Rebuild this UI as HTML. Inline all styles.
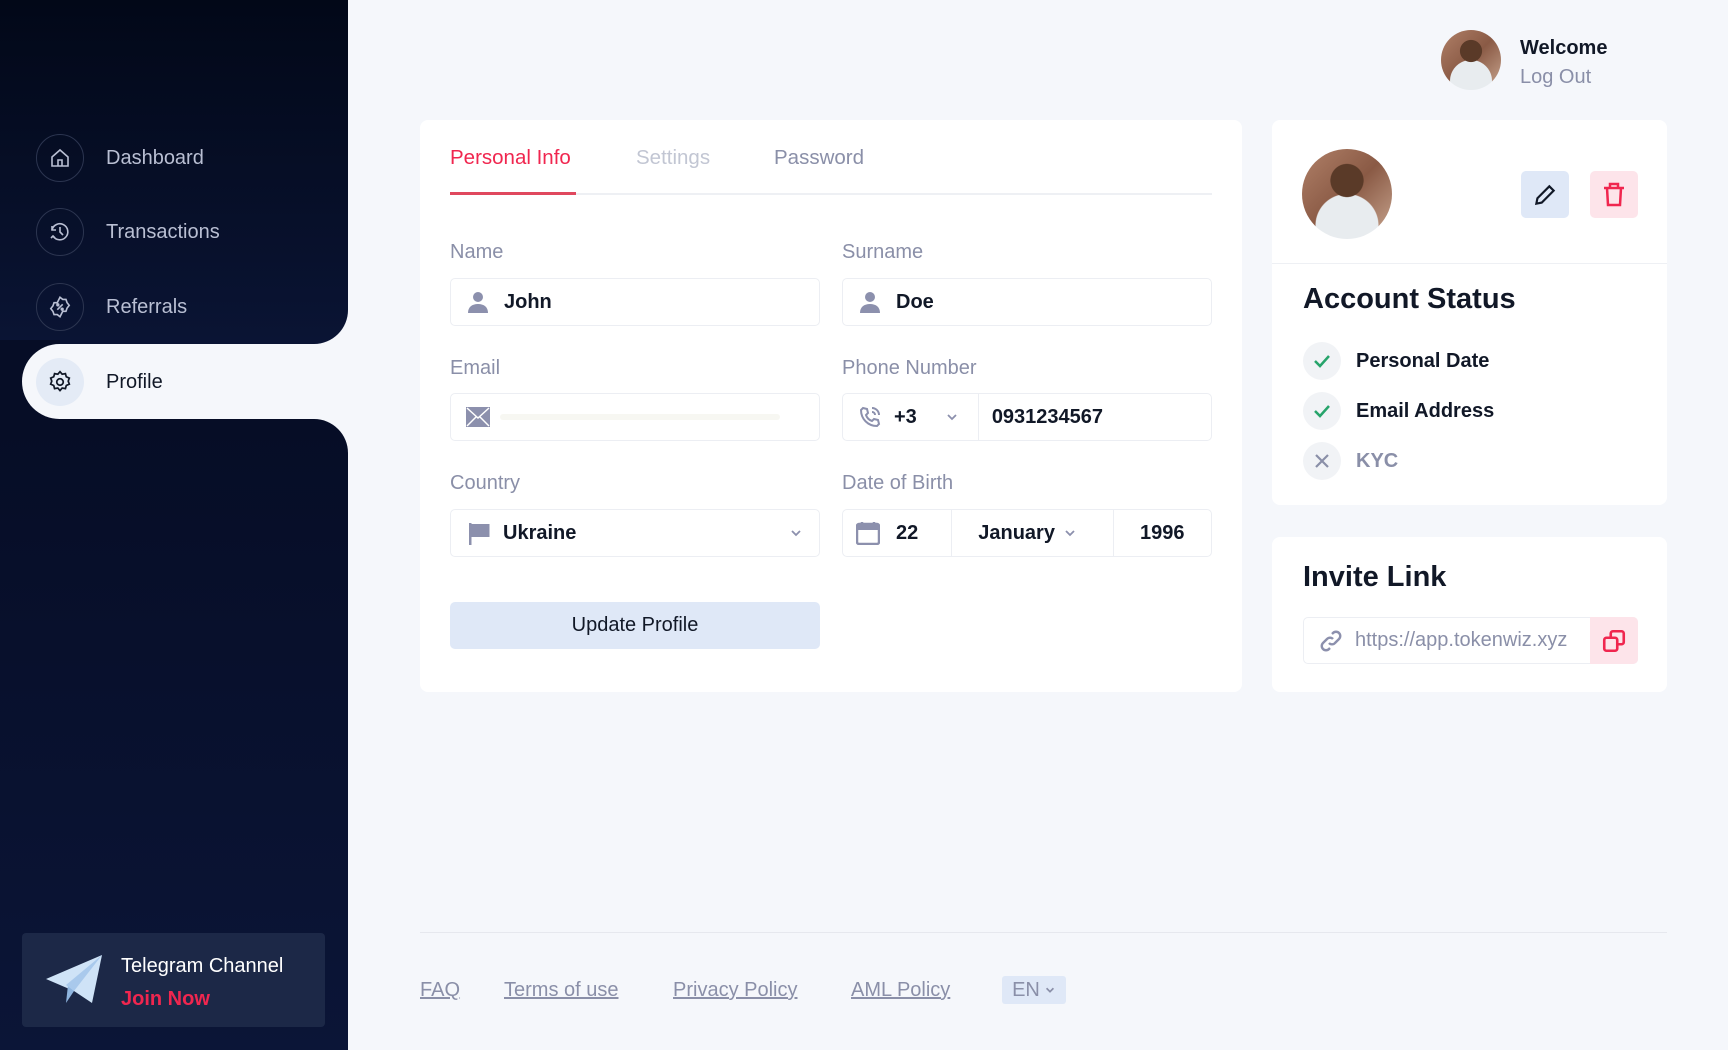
<!DOCTYPE html>
<html><head><meta charset="utf-8"><style>
*{box-sizing:border-box;margin:0;padding:0}
body{width:1728px;height:1050px;background:#f5f7fb;font-family:"Liberation Sans",sans-serif;position:relative;overflow:hidden;color:#111827}
.a{position:absolute}
.dark{background:linear-gradient(180deg,#020818,#0a1434)}
.nav{position:absolute;left:36px;width:300px;height:48px;display:flex;align-items:center;color:#b9bfd3;font-size:20px}
.nav .ic{width:48px;height:48px;border-radius:50%;border:1.5px solid #2c3550;display:flex;align-items:center;justify-content:center;margin-right:22px}
.card{position:absolute;background:#fff;border-radius:8px}
.lbl{position:absolute;color:#8a8fa8;font-size:20px}
.inp{position:absolute;height:48px;border:1px solid #eceef3;border-radius:5px;background:#fff;display:flex;align-items:center;font-size:20px;font-weight:bold;color:#111827}
.st{position:absolute;left:1303px;display:flex;align-items:center;font-size:20px;font-weight:bold;color:#111827}
.st .c{width:38px;height:38px;border-radius:50%;background:#f1f3f6;display:flex;align-items:center;justify-content:center;margin-right:15px}
.ft{position:absolute;top:979px;font-size:20px;color:#8a8fa8;text-decoration:underline}
.photo{border-radius:50%;background:radial-gradient(circle at 50% 35%,#5a3a28 0 22%,transparent 23%),radial-gradient(circle at 50% 85%,#e8ecef 0 35%,transparent 36%),linear-gradient(135deg,#b08068,#8a5a45 50%,#c9a690)}
</style></head><body>
<div class="a dark" style="left:0;top:0;width:348px;height:344px;border-bottom-right-radius:34px"></div>
<div class="a" style="left:0;top:340px;width:60px;height:84px;background:#060d26"></div>
<div class="a dark" style="left:0;top:419px;width:348px;height:631px;border-top-right-radius:34px;background:linear-gradient(180deg,#060d26,#0b1537)"></div>
<div class="a" style="left:22px;top:344px;width:340px;height:75px;background:#f5f7fb;border-radius:38px 0 0 38px"></div>

<div class="nav" style="top:134px"><div class="ic"><svg width="24" height="24" viewBox="0 0 24 24" fill="none" stroke="#b9bfd3" stroke-width="1.6"><path d="M4 11l8-7 8 7v9H4z"/><path d="M10 20v-6h4v6"/></svg></div>Dashboard</div>
<div class="nav" style="top:208px"><div class="ic"><svg width="24" height="24" viewBox="0 0 24 24" fill="none" stroke="#b9bfd3" stroke-width="1.6"><path d="M5 16a8 8 0 1 0-1-6"/><path d="M4 6v4h4M12 7v5l3 3M3 18l2-2 2 2"/></svg></div>Transactions</div>
<div class="nav" style="top:283px"><div class="ic"><svg width="26" height="26" viewBox="0 0 24 24" fill="none" stroke="#b9bfd3" stroke-width="1.5"><path d="M12 3l2.5 2h3l1 3 2 2.5-2 2.5-1 3h-3L12 21l-2.5-2h-3l-1-3L3.5 13.5 5.5 11l1-3h3z"/><path d="M9.5 14.5l5-5"/><circle cx="10" cy="10" r=".8"/><circle cx="14" cy="14" r=".8"/></svg></div>Referrals</div>
<div class="nav" style="top:358px;color:#111827"><div class="ic" style="border:none;background:#e4ebf6"><svg width="26" height="26" viewBox="0 0 24 24" fill="none" stroke="#111827" stroke-width="1.6"><circle cx="12" cy="12" r="3"/><path d="M12 2.5l2 2.3 3-.5.8 2.9 2.8 1.2-1 2.8 1 2.8-2.8 1.2-.8 2.9-3-.5-2 2.3-2-2.3-3 .5-.8-2.9-2.8-1.2 1-2.8-1-2.8 2.8-1.2.8-2.9 3 .5z"/></svg></div>Profile</div>

<div class="a" style="left:22px;top:933px;width:303px;height:94px;background:#1c2847;border-radius:4px"></div>
<svg class="a" style="left:44px;top:953px" width="60" height="54" viewBox="0 0 60 54"><path d="M2 26L58 2 48 50 30 38z" fill="#cfe3f7"/><path d="M30 38l-8 12 2-18z" fill="#8fb5df"/><path d="M22 32L58 2 30 38z" fill="#a9c9ec"/></svg>
<div class="a" style="left:121px;top:955px;color:#fff;font-size:20px">Telegram Channel</div>
<div class="a" style="left:121px;top:988px;color:#f0264f;font-size:20px;font-weight:bold">Join Now</div>

<div class="a photo" style="left:1441px;top:30px;width:60px;height:60px"></div>
<div class="a" style="left:1520px;top:37px;font-size:20px;font-weight:bold;color:#111827">Welcome</div>
<div class="a" style="left:1520px;top:66px;font-size:20px;color:#8a8fa8">Log Out</div>

<div class="card" style="left:420px;top:120px;width:822px;height:572px"></div>
<div class="a" style="left:450px;top:146px;font-size:20.5px;color:#f0264f">Personal Info</div>
<div class="a" style="left:636px;top:146px;font-size:20.5px;color:#c2c6d3">Settings</div>
<div class="a" style="left:774px;top:146px;font-size:20.5px;color:#8a8fa8">Password</div>
<div class="a" style="left:450px;top:193px;width:762px;height:2px;background:#eef0f4"></div>
<div class="a" style="left:450px;top:192px;width:126px;height:3px;background:#e0485e"></div>

<div class="lbl" style="left:450px;top:241px">Name</div>
<div class="lbl" style="left:842px;top:241px">Surname</div>
<div class="inp" style="left:450px;top:278px;width:370px"><svg style="margin:0 14px 0 15px" width="24" height="24" viewBox="0 0 24 24" fill="#8c90ad"><circle cx="12" cy="7" r="5"/><path d="M2 23c0-6 4-9 10-9s10 3 10 9z"/></svg>John</div>
<div class="inp" style="left:842px;top:278px;width:370px"><svg style="margin:0 14px 0 15px" width="24" height="24" viewBox="0 0 24 24" fill="#8c90ad"><circle cx="12" cy="7" r="5"/><path d="M2 23c0-6 4-9 10-9s10 3 10 9z"/></svg>Doe</div>

<div class="lbl" style="left:450px;top:357px">Email</div>
<div class="lbl" style="left:842px;top:357px">Phone Number</div>
<div class="inp" style="left:450px;top:393px;width:370px"><svg style="margin:0 0 0 15px" width="24" height="20" viewBox="0 0 24 20"><rect width="24" height="20" fill="#8c90ad"/><path d="M1 1l11 10L23 1M1 19l9-9M23 19l-9-9" stroke="#fff" stroke-width="1.5" fill="none"/></svg><div style="margin-left:10px;width:280px;height:6px;background:#f7f7f2;border-radius:3px"></div></div>
<div class="inp" style="left:842px;top:393px;width:370px"><svg style="margin:0 12px 0 15px" width="24" height="24" viewBox="0 0 24 24" fill="none" stroke="#8c90ad" stroke-width="2"><path d="M5 3l4 1 1 4-2 2c1 3 3 5 6 6l2-2 4 1 1 4-2 2C10 21 3 14 3 5z"/><path d="M14 3a7 7 0 0 1 7 7M14 7a3 3 0 0 1 3 3"/></svg>+3<svg style="margin-left:28px" width="14" height="14" viewBox="0 0 14 14" fill="none" stroke="#8c90ad" stroke-width="1.8"><path d="M3 5l4 4 4-4"/></svg><div style="width:1px;height:46px;background:#eceef3;margin:0 13px 0 19px"></div>0931234567</div>

<div class="lbl" style="left:450px;top:472px">Country</div>
<div class="lbl" style="left:842px;top:472px">Date of Birth</div>
<div class="inp" style="left:450px;top:509px;width:370px"><svg style="margin:0 12px 0 16px" width="24" height="26" viewBox="0 0 24 26"><rect x="2" y="3" width="2.5" height="22" fill="#8c90ad"/><path d="M4.5 4h18v13h-18z" fill="#8c90ad"/></svg>Ukraine<svg style="position:absolute;right:16px" width="14" height="14" viewBox="0 0 14 14" fill="none" stroke="#8c90ad" stroke-width="1.8"><path d="M3 5l4 4 4-4"/></svg></div>
<div class="inp" style="left:842px;top:509px;width:370px"><svg style="margin:0 16px 0 13px" width="24" height="24" viewBox="0 0 24 24"><rect x="1" y="3" width="22" height="20" rx="2" fill="none" stroke="#8c90ad" stroke-width="2.5"/><rect x="1" y="3" width="22" height="6" fill="#8c90ad"/><path d="M6 1v4M18 1v4" stroke="#8c90ad" stroke-width="2.5"/></svg>22<div style="width:1px;height:46px;background:#eceef3;margin-left:33px"></div><span style="margin-left:26px">January</span><svg style="margin-left:8px" width="14" height="14" viewBox="0 0 14 14" fill="none" stroke="#8c90ad" stroke-width="1.8"><path d="M3 5l4 4 4-4"/></svg><div style="width:1px;height:46px;background:#eceef3;margin-left:36px"></div><span style="margin-left:26px">1996</span></div>

<div class="a" style="left:450px;top:602px;width:370px;height:47px;background:#dfe8f7;border-radius:5px;display:flex;align-items:center;justify-content:center;font-size:20px;color:#111827">Update Profile</div>

<div class="card" style="left:1272px;top:120px;width:395px;height:385px"></div>
<div class="a photo" style="left:1302px;top:149px;width:90px;height:90px"></div>
<div class="a" style="left:1521px;top:171px;width:48px;height:47px;background:#dfe8f7;border-radius:5px;display:flex;align-items:center;justify-content:center"><svg width="26" height="26" viewBox="0 0 24 24" fill="none" stroke="#111827" stroke-width="2"><path d="M4 20l1-5L16 4l4 4L9 19z"/></svg></div>
<div class="a" style="left:1590px;top:171px;width:48px;height:47px;background:#fde4ea;border-radius:5px;display:flex;align-items:center;justify-content:center"><svg width="24" height="26" viewBox="0 0 24 26" fill="none" stroke="#f0264f" stroke-width="2.5"><path d="M2 6h20M8 6V2h8v4M5 6l1 17h12l1-17"/></svg></div>
<div class="a" style="left:1272px;top:263px;width:395px;height:1px;background:#eef0f4"></div>
<div class="a" style="left:1303px;top:283px;font-size:29px;font-weight:bold;color:#111827">Account Status</div>
<div class="st" style="top:342px"><div class="c"><svg width="18" height="14" viewBox="0 0 18 14" fill="none" stroke="#27a46b" stroke-width="2.5"><path d="M2 7l5 5L16 2"/></svg></div>Personal Date</div>
<div class="st" style="top:392px"><div class="c"><svg width="18" height="14" viewBox="0 0 18 14" fill="none" stroke="#27a46b" stroke-width="2.5"><path d="M2 7l5 5L16 2"/></svg></div>Email Address</div>
<div class="st" style="top:442px;color:#8a8fa8"><div class="c"><svg width="16" height="16" viewBox="0 0 16 16" fill="none" stroke="#8a8fa8" stroke-width="2.2"><path d="M2 2l12 12M14 2L2 14"/></svg></div>KYC</div>

<div class="card" style="left:1272px;top:537px;width:395px;height:155px"></div>
<div class="a" style="left:1303px;top:561px;font-size:29px;font-weight:bold;color:#111827">Invite Link</div>
<div class="a" style="left:1303px;top:617px;width:335px;height:47px;border:1px solid #eceef3;border-radius:5px;display:flex;align-items:center;font-size:20px;color:#8a8fa8;overflow:hidden;white-space:nowrap"><svg style="margin:0 12px 0 15px;flex:none" width="24" height="24" viewBox="0 0 24 24" fill="none" stroke="#8c90ad" stroke-width="2.4"><path d="M10 14a4 4 0 0 0 6 0l4-4a4 4 0 0 0-6-6l-1 1M14 10a4 4 0 0 0-6 0l-4 4a4 4 0 0 0 6 6l1-1"/></svg><span style="width:232px;overflow:hidden">https://app.tokenwiz.xyz</span></div>
<div class="a" style="left:1590px;top:617px;width:48px;height:47px;background:#fde4ea;border-radius:0 5px 5px 0;display:flex;align-items:center;justify-content:center"><svg width="26" height="26" viewBox="0 0 24 24" fill="none" stroke="#f0264f" stroke-width="2.4"><rect x="3" y="9" width="12" height="12" rx="2"/><path d="M9 9V5a2 2 0 0 1 2-2h8a2 2 0 0 1 2 2v8a2 2 0 0 1-2 2h-4"/></svg></div>

<div class="a" style="left:420px;top:932px;width:1247px;height:1px;background:#e6e8ee"></div>
<div class="ft" style="left:420px">FAQ</div>
<div class="ft" style="left:504px">Terms of use</div>
<div class="ft" style="left:673px">Privacy Policy</div>
<div class="ft" style="left:851px">AML Policy</div>
<div class="a" style="left:1002px;top:976px;width:64px;height:28px;background:#dfe8f7;border-radius:3px;display:flex;align-items:center;justify-content:center;font-size:20px;color:#8a8fa8">EN<svg style="margin-left:4px" width="12" height="12" viewBox="0 0 14 14" fill="none" stroke="#8a8fa8" stroke-width="2"><path d="M3 5l4 4 4-4"/></svg></div>
</body></html>
